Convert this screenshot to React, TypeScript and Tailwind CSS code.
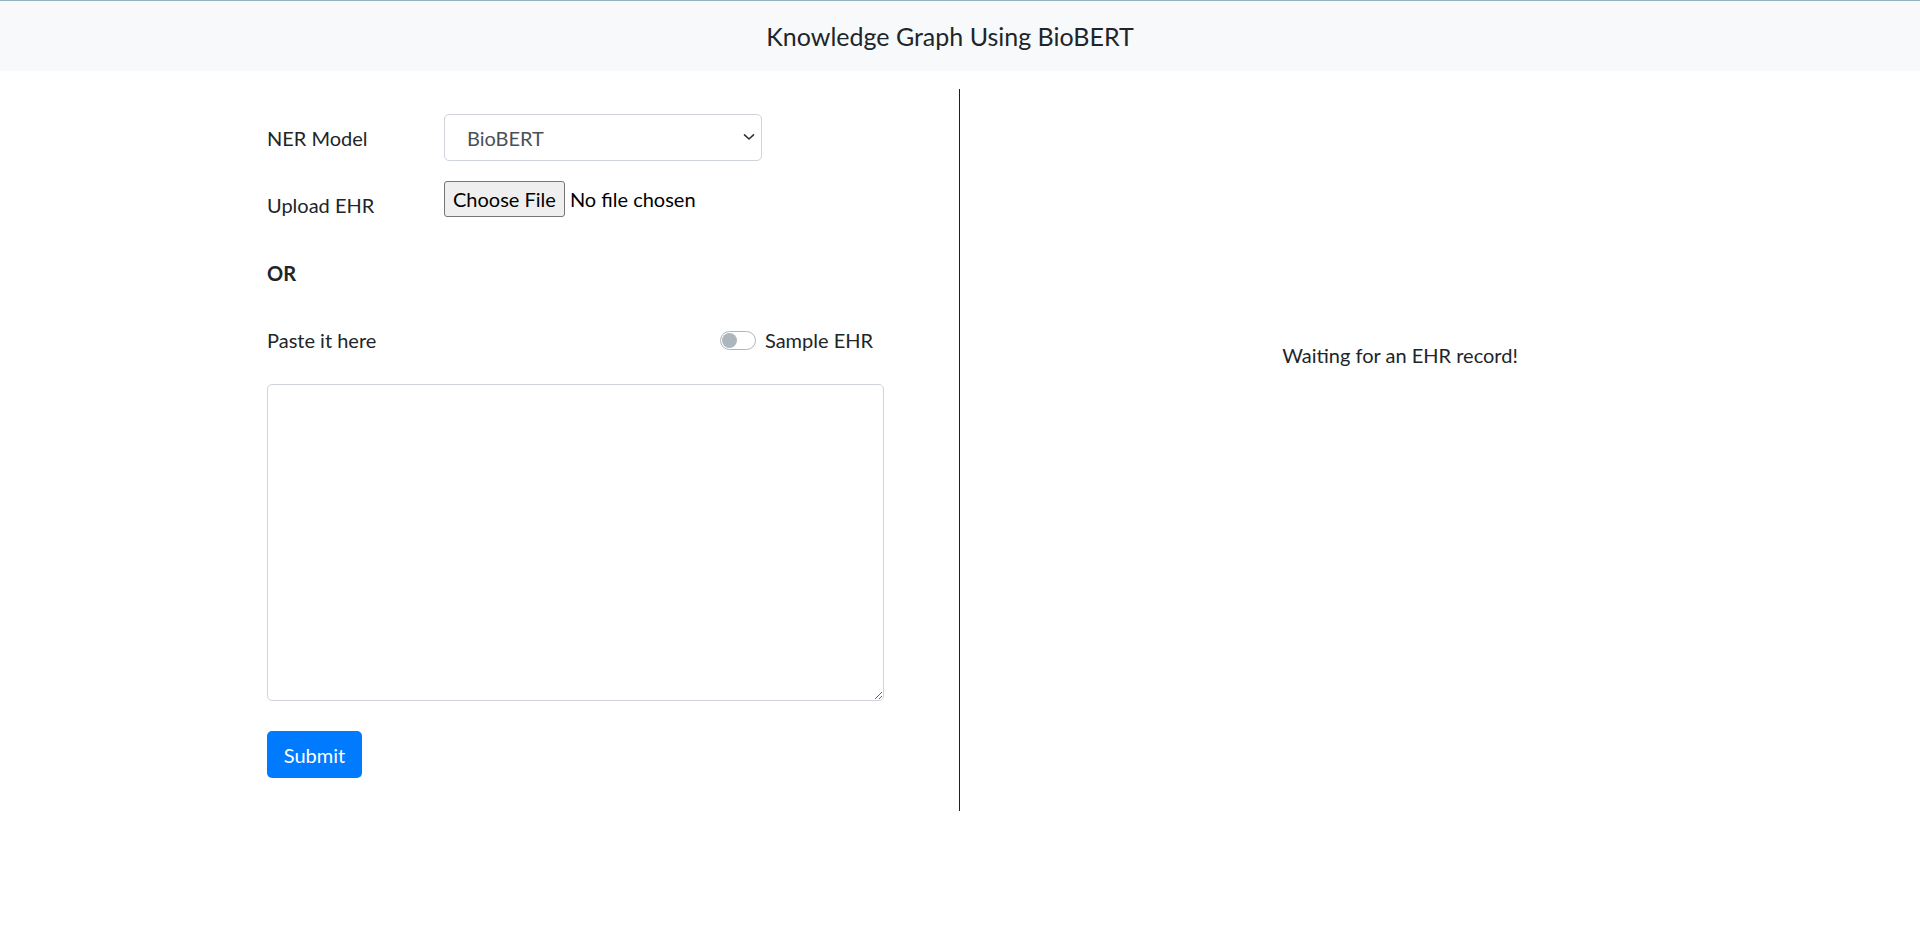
import React from "react";

export default function App() {
  return (
    <div className="min-h-[944px] bg-white text-[#212529] font-['Lato','Open_Sans',sans-serif] text-[20px] leading-[30px]">
      {/* Navbar */}
      <div className="h-[71px] border-t border-[#93b4bd] bg-[#f8f9fa] flex items-center justify-center">
        <div className="mr-[20px] text-[25px] leading-[37px] text-[#212529]">Knowledge Graph Using BioBERT</div>
      </div>

      {/* Main */}
      <div className="pt-[18px] flex">
        {/* Left column */}
        <div className="w-[960px] border-r border-[#1f1f1f]">
          <div className="pt-[25px] pb-[33px] pl-[267px] w-[884px] flex flex-col">
            {/* Row 1 */}
            <div className="flex items-center h-[47px]">
              <div className="w-[177px]">NER Model</div>
              <div className="relative w-[318px] h-[47px]">
                <select
                  className="appearance-none w-full h-full border border-[#ced4da] rounded-[5px] bg-white pl-[22px] pr-[30px] text-[#495057] outline-none"
                  defaultValue="BioBERT"
                >
                  <option>BioBERT</option>
                </select>
                <svg
                  className="absolute right-[7px] top-[19px] pointer-events-none"
                  width="12"
                  height="8"
                  viewBox="0 0 12 8"
                  fill="none"
                >
                  <path d="M1.5 1.8 L6 6 L10.5 1.8" stroke="#333" strokeWidth="1.6" strokeLinecap="round" strokeLinejoin="round" />
                </svg>
              </div>
            </div>

            {/* Row 2 */}
            <div className="flex items-start mt-[20px] h-[47px]">
              <div className="w-[177px] pt-[9px]">Upload EHR</div>
              <div className="flex items-center h-[36px]">
                <button className="h-[36px] px-[8px] border border-[#767676] rounded-[3px] bg-[#efefef] text-[#000] leading-[28px]">
                  Choose File
                </button>
                <span className="ml-[5px] text-[#000]">No file chosen</span>
              </div>
            </div>

            {/* OR */}
            <div className="mt-[30px] font-bold">OR</div>

            {/* Paste row */}
            <div className="mt-[37px] h-[30px] flex items-center justify-between pr-[11px]">
              <div>Paste it here</div>
              <div className="flex items-center">
                <div className="relative w-[36px] h-[19px] rounded-full border border-[#adb5bd] bg-white">
                  <div className="absolute left-[1px] top-[1px] w-[15px] h-[15px] rounded-full bg-[#adb5bd]" />
                </div>
                <span className="ml-[9px]">Sample EHR</span>
              </div>
            </div>

            {/* Textarea */}
            <textarea className="mt-[29px] w-[617px] h-[317px] border border-[#ced4da] rounded-[5px] bg-white outline-none p-[8px]" />

            {/* Submit */}
            <div className="mt-[30px]">
              <button className="h-[47px] w-[95px] rounded-[5px] bg-[#007bff] text-white">Submit</button>
            </div>
          </div>
        </div>

        {/* Right column */}
        <div className="w-[880px] pt-[251px] text-center">Waiting for an EHR record!</div>
      </div>
    </div>
  );
}
